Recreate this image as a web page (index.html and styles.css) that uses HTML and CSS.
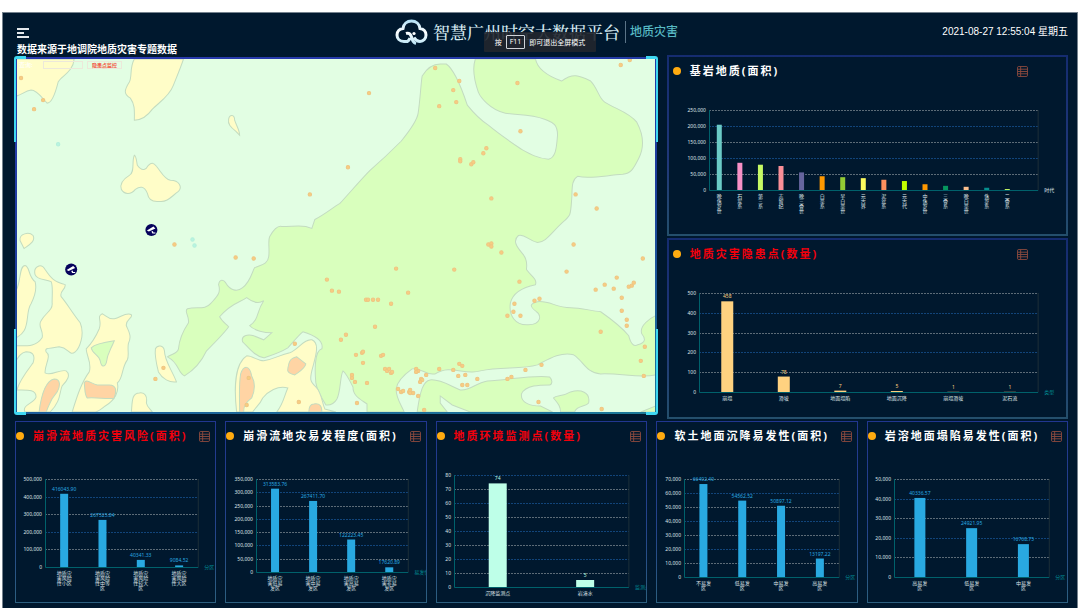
FILE: index.html
```html
<!DOCTYPE html>
<html lang="zh-CN">
<head>
  <meta charset="UTF-8">
  <meta name="viewport" content="width=device-width,initial-scale=1">
  <title>智慧广州时空大数据平台</title>
  <link rel="stylesheet" href="styles.css">
</head>
<body>
<svg class="defs" aria-hidden="true">
  <symbol id="icon-table" viewBox="0 0 12 12">
    <rect x="0.5" y="0.5" width="11" height="11" rx="1.5"/>
    <path d="M0.5 3.5h11M0.5 6h11M0.5 8.5h11M4 0.5v11"/>
  </symbol>
</svg>

<div class="app">
  <header class="header">
    <div class="header-left">
      <button class="menu-btn" type="button" aria-label="菜单">
        <svg viewBox="0 0 12 10"><path d="M0 1h12M0 5h7M0 9h12"/></svg>
      </button>
      <p class="source">数据来源于地调院地质灾害专题数据</p>
    </div>

    <div class="brand">
      <svg class="logo" viewBox="0 0 33 26" aria-hidden="true">
        <defs>
          <linearGradient id="logo-fill" gradientUnits="userSpaceOnUse" x1="0" y1="0" x2="0" y2="26">
            <stop offset="0" stop-color="#a9dcf5"/>
            <stop offset="0.5" stop-color="#ffffff"/>
            <stop offset="1" stop-color="#b9e4f5"/>
          </linearGradient>
        </defs>
        <path stroke="url(#logo-fill)" d="M13 22.500H9C4.500 22.500 2 19.500 2 16C2 12.500 4.500 10 8 9.500C8.500 5 12 2 16.500 2C21 2 24.500 5 25 9.500C28.500 10 31 12.500 31 16C31 19.500 28.500 22.500 25 22.500C22.500 22.500 20.500 21 19 18.500"/>
        <path stroke="url(#logo-fill)" d="M11 14.500C14 13.500 15.500 15 16.500 18C17.500 21.500 18 23.500 21 24.500M12.500 22.500C14 21.500 14.500 20.500 15 19"/>
        <circle cx="19" cy="14.500" r="1.600"/>
      </svg>
      <h1>智慧广州时空大数据平台</h1>
      <span class="brand-sub">地质灾害</span>
      <div class="fs-tip">按 <kbd>F11</kbd> 即可退出全屏模式</div>
    </div>

    <time class="clock" datetime="2021-08-27T12:55:04">2021-08-27 12:55:04 星期五</time>
  </header>

  <main class="main">
    <div class="row-top">
      <section class="map">
        <svg class="map-svg" viewBox="17 59 638 352" preserveAspectRatio="xMidYMid slice" role="img" aria-label="地质灾害分布图">
          <rect class="base" x="17" y="59" width="638" height="352"/>

          <!-- main green zone -->
          <path class="green" d="M168 356C172 353 178 353 179 348C180 336 185 328 189 322C190 315 184 310 188 308C198 306 206 309 211 303C216 297 222 293 219 284C220 278 224 279 226 282C230 289 237 292 243 287C251 281 252 272 255 267C262 264 268 264 269 256C270 248 268 240 270 236C274 229 278 225 282 226C292 226 300 225 306 226L312 228L315 219C325 214 333 207 340 203C350 192 362 178 370 170C385 157 395 147 401 141C410 130 417 120 418 113C420 100 421 80 422 76C428 66 434 64 440 64L446 64C455 70 463 93 467 105C475 115 482 121 488 125C500 135 515 145 521 149C530 154 537 158 548 159C556 157 556 145 557 135C557 122 550 122 544 119C530 114 515 115 505 113C490 110 480 97 478 92C472 75 473 65 475 59L535 59C537 70 550 77 561 81C572 73 578 75 590 81C597 88 598 98 604 102C615 109 628 112 636 122C643 135 643 148 638 158C632 170 630 173 622 174C605 175 590 179 577 176C570 180 572 190 571 200C570 215 570 215 562 222C550 233 545 242 537 242C528 240 524 233 518 235C512 240 516 246 522 253C528 260 526 265 526 269C530 275 537 278 535 284C525 286 513 290 510 302C508 315 515 325 528 324C541 324 541 314 536 311C528 305 530 303 537 301C550 300 555 307 570 307C580 307 590 310 600 311C610 318 620 325 628 335C630 343 633 346 637 344C645 342 645 338 641 333C638 325 650 317 655 315L655 374C640 378 620 372 600 373C585 372 583 360 573 354C560 350 545 360 537 364C520 369 500 365 480 370C465 375 450 363 435 373C425 375 421 366 412 368C405 373 397 380 396 388C396 398 402 405 404 411L367 411L367 403C360 398 353 395 353 386C350 380 346 372 343 370C340 375 341 390 337 398C333 405 328 404 326 404C321 396 317 389 316 382C315 372 314 350 322 348C324 340 316 335 303 331C298 335 290 345 288 347C280 352 270 355 264 357C255 355 250 348 243 341C241 335 248 333 254 335L264 339L272 332C265 332 255 330 250 325C260 318 256 312 264 300C258 304 252 301 247 297C240 302 232 302 220 316C222 320 225 322 229 326C225 332 212 345 207 350C200 365 190 372 185 375C178 372 180 362 168 356Z"/>
          <path class="green" d="M417 411C420 390 423 380 430 379C440 378 450 385 460 389C470 390 475 382 487 380C510 379 530 374 549 376C553 380 551 384 549 384C540 384 525 384 521 393C520 402 530 405 540 405L552 411L470 411L452 404L440 395L440 402L447 411Z"/>
          <path class="green" d="M553 397C556 394 562 396 570 391C580 388 590 391 588 402C585 406 576 404 574 411L560 411C560 405 557 402 553 397Z"/>
          <path class="green" d="M655 405L640 411H655Z"/>

          <!-- yellow zones -->
          <path class="yellow" d="M17 59L75 59C74 72 62 76 59 82C57 90 53 103 48 103C43 98 38 90 32 90C26 91 22 95 17 96Z"/>
          <path class="yellow" d="M135 59C130 68 133 76 130 82C125 90 124 94 131 98C136 105 135 112 135 120C142 120 148 116 153 109C160 102 170 96 174 85C178 75 181 68 184 59Z"/>
          <path class="yellow" d="M229 119C230 114 235 114 235 120C237 126 240 130 240 135L236 131C231 127 228 124 229 119Z"/>
          <path class="yellow" d="M135 155C137 156 137 160 138 165C143 172 147 169 149 165C152 162 154 162 157 166C162 172 165 179 171 180C180 180 183 187 179 191C172 196 168 202 160 201C152 202 149 199 148 193C145 185 140 186 136 189C131 195 125 194 122 189C120 182 125 178 130 175C136 172 132 161 135 155Z"/>
          <path class="yellow" d="M21 240C20 233 30 231 34 235C37 241 29 245 25 248Z"/>
          <path class="yellow" d="M17 290C22 282 20 265 26 265C31 266 29 276 36 281C38 288 35 297 32 303C27 310 30 322 25 330C22 335 20 335 17 337Z"/>
          <path class="yellow" d="M17 345C28 345 37 346 43 337C45 330 38 325 42 320C46 312 54 310 53 302C53 292 54 285 52 281C47 278 38 280 36 274C34 266 42 262 46 269C52 278 55 281 66 284C67 289 60 290 62 296C68 303 73 312 81 322C86 334 80 348 76 351C70 356 70 347 60 346C52 348 45 346 47 351C53 355 45 365 46 372C52 376 60 368 67 370C72 374 68 380 63 385C60 392 62 400 51 411L26 411C22 404 36 402 37 396C37 388 28 389 18 389C20 380 28 370 34 362C37 353 32 351 27 351C22 352 20 355 17 360Z"/>
          <path class="yellow" d="M73 411C78 395 82 382 90 371C93 362 87 355 87 348C93 342 97 335 100 328C103 320 97 316 103 313C107 315 109 319 115 318C121 317 127 311 132 314C134 317 126 319 127 325C129 330 133 335 129 343C128 349 130 355 128 359C122 367 124 378 118 382C120 390 116 399 106 405C100 410 98 411 96 411Z"/>
          <path class="yellow" d="M156 348C158 344 164 344 165 350C165 360 172 368 177 381C170 382 163 378 159 371C157 363 155 355 156 348Z"/>
          <path class="yellow" d="M132 411C133 402 132 392 140 392C146 391 148 396 147 402C148 407 151 408 153 411Z"/>
          <path class="yellow" d="M237 411C234 385 236 362 247 355C253 355 258 360 264 360C275 358 280 354 290 352C299 348 304 338 312 339C320 342 316 355 313 366C309 380 311 381 316 386C322 392 322 402 325 408L336 411L277 411C284 402 284 396 288 387C278 384 268 391 263 397C260 404 256 406 253 411Z"/>
          <path class="green" d="M92 347C96 343 108 341 115 340C111 350 108 352 107 362C105 367 102 366 101 360C100 354 93 353 92 347Z"/>

          <!-- orange zones -->
          <path class="orange" d="M40 411C42 395 46 380 55 378C62 378 61 386 58 391C50 400 50 405 47 411Z"/>
          <path class="orange" d="M85 382C87 377 92 383 98 384L110 384C118 384 117 391 115 397C110 399 98 396 88 397C85 393 86 388 85 382Z"/>
          <path class="orange" d="M240 411C240 395 239 385 241 373C244 364 250 364 252 375C256 382 255 390 252 397C247 401 244 404 244 411Z"/>
          <path class="orange" d="M297 356L306 363C305 368 299 371 295 374C290 373 287 371 288 368C289 362 289 358 297 356Z"/>
          <path class="orange" d="M309 411C309 405 311 403 314 403C320 402 322 405 322 411Z"/>

          <g id="map-dots"></g>

          <g class="camera" transform="translate(152 229.500)">
            <circle r="6"/>
            <path d="M-4.500 0.500L2 -3.500L4 -1.500L-2.500 1.500ZM0 1.500L1 3.500H4V2.500H2L1.500 1Z"/>
          </g>
          <g class="camera" transform="translate(72 269)">
            <circle r="6"/>
            <path d="M-4.500 0.500L2 -3.500L4 -1.500L-2.500 1.500ZM0 1.500L1 3.500H4V2.500H2L1.500 1Z"/>
          </g>
        </svg>

        <div class="map-tools">
          <label for="layer">查询:</label>
          <input id="layer" type="text">
          <button type="button">隐患点监控</button>
        </div>
        <i class="corner tl"></i><i class="corner tr"></i><i class="corner bl"></i><i class="corner br"></i>
      </section>

      <div class="side">
        <section class="panel wide">
          <div class="panel-head">
            <h2>基岩地质(面积)</h2>
            <button type="button" aria-label="表格"><svg><use href="#icon-table"/></svg></button>
          </div>
          <svg class="chart" data-chart="bedrock"></svg>
        </section>
        <section class="panel wide">
          <div class="panel-head alert">
            <h2>地质灾害隐患点(数量)</h2>
            <button type="button" aria-label="表格"><svg><use href="#icon-table"/></svg></button>
          </div>
          <svg class="chart" data-chart="hazard"></svg>
        </section>
      </div>
    </div>

    <div class="row-bottom">
      <section class="panel">
        <div class="panel-head alert">
          <h2>崩滑流地质灾害风险(面积)</h2>
          <button type="button" aria-label="表格"><svg><use href="#icon-table"/></svg></button>
        </div>
        <svg class="chart" data-chart="risk"></svg>
      </section>
      <section class="panel">
        <div class="panel-head">
          <h2>崩滑流地灾易发程度(面积)</h2>
          <button type="button" aria-label="表格"><svg><use href="#icon-table"/></svg></button>
        </div>
        <svg class="chart" data-chart="prone"></svg>
      </section>
      <section class="panel">
        <div class="panel-head alert">
          <h2>地质环境监测点(数量)</h2>
          <button type="button" aria-label="表格"><svg><use href="#icon-table"/></svg></button>
        </div>
        <svg class="chart" data-chart="monitor"></svg>
      </section>
      <section class="panel">
        <div class="panel-head">
          <h2>软土地面沉降易发性(面积)</h2>
          <button type="button" aria-label="表格"><svg><use href="#icon-table"/></svg></button>
        </div>
        <svg class="chart" data-chart="softsoil"></svg>
      </section>
      <section class="panel">
        <div class="panel-head">
          <h2>岩溶地面塌陷易发性(面积)</h2>
          <button type="button" aria-label="表格"><svg><use href="#icon-table"/></svg></button>
        </div>
        <svg class="chart" data-chart="karst"></svg>
      </section>
    </div>
  </main>
</div>
<script src="charts.js"></script>
</body>
</html>
```
FILE: styles.css
```css
* { box-sizing: border-box; margin: 0; padding: 0 }
body {
  height: 100vh;
  padding: 12px 2px 0;
  background: #fff;
  color: #fff;
  font-family: "Noto Sans", "Noto Sans CJK SC", sans-serif;
}
button { background: none; border: 0; cursor: pointer }
.defs { position: absolute; width: 0; height: 0 }
.app {
  display: flex;
  flex-direction: column;
  height: 100%;
  padding: 0 9px 5px 12px;
  background: #00182e;
  border: 1px solid #75828e;
  border-bottom: 0;
}

/* header */
.header {
  display: grid;
  grid-template-columns: 1fr auto 1fr;
  height: 42px;
}
.header-left {
  display: flex;
  flex-direction: column;
  justify-content: flex-end;
  align-items: flex-start;
  gap: 5px;
  padding-left: 2px;
}
.menu-btn { width: 12px; height: 10px }
.menu-btn svg {
  display: block;
  width: 100%;
  height: 100%;
  stroke: #e4e8ec;
  stroke-width: 2;
}
.source {
  font-size: 10px;
  line-height: 12px;
  font-weight: bold;
  white-space: nowrap;
}
.brand {
  position: relative;
  display: flex;
  align-items: center;
  gap: 5px;
  height: 38px;
  padding-right: 10px;
  white-space: nowrap;
}
.logo { width: 33px; height: 26px; fill: none; stroke-width: 3 }
.logo circle { fill: #fff }
.brand h1 {
  font-family: "Noto Serif CJK SC", "Noto Sans CJK SC", serif;
  font-size: 17px;
  line-height: 22px;
  font-weight: 500;
  color: #d5e9f1;
}
.brand-sub {
  padding-left: 4px;
  border-left: 1px solid #5b7387;
  font-size: 12px;
  line-height: 22px;
  font-weight: 500;
  color: #57b9c4;
}
.fs-tip {
  position: absolute;
  top: 19px;
  left: 89px;
  display: flex;
  align-items: center;
  justify-content: center;
  gap: 4px;
  width: 112px;
  height: 20px;
  background: rgba(33, 38, 46, .9);
  border-radius: 1px;
  font-size: 7px;
}
.fs-tip kbd {
  padding: 0 3px;
  border: 1px solid #cfd3d8;
  border-radius: 1px;
  font: 7px/12px "Noto Sans", sans-serif;
}
.clock {
  justify-self: end;
  font: 10px/38px "Liberation Sans", "Noto Sans CJK SC", sans-serif;
}

/* layout */
.main {
  flex: 1;
  min-height: 0;
  display: grid;
  grid-template-rows: minmax(0, 2fr) minmax(0, 1fr);
  gap: 2px;
}
.row-top {
  display: grid;
  grid-template-columns: 8fr 5fr;
  gap: 10px;
}
.side {
  display: grid;
  grid-template-rows: repeat(2, minmax(0, 1fr));
  gap: 2px;
}
.row-bottom {
  display: grid;
  grid-template-columns: 19fr 19fr 20fr 19fr 19fr;
  gap: 9px;
}

/* map */
.map {
  position: relative;
  min-height: 0;
  margin: 2px 0 5px;
  border: 2px solid;
  border-image: linear-gradient(170deg, #2a3ab0, #1c3d9c 50%, #1c7a98) 1;
}
.map-svg { display: block; width: 100%; height: 100% }
.map-svg path { stroke: #c3dcc0; stroke-width: 1 }
.base { fill: #e2fee3 }
.green { fill: #d9ffbd }
.yellow { fill: #fffdc8 }
.orange { fill: #ffd4a4 }
.dot { fill: #f8cd80; stroke: #eec583 }
.dot.water { fill: #b9f5e0; stroke: #b4efdc }
.camera circle { fill: #06035c }
.map-svg .camera path { fill: #fff; stroke: none }
.map-tools {
  position: absolute;
  top: 2px;
  left: 2px;
  display: flex;
  align-items: center;
  gap: 4px;
  font-size: 6px;
  line-height: 8px;
}
.map-tools label { width: 20px }
.map-tools input,
.map-tools button {
  height: 8px;
  border: 1px solid #ece8da;
  background: transparent;
}
.map-tools input { width: 40px }
.map-tools button {
  padding: 0 4px;
  color: #f4533f;
  font: bold 5px/6px "Noto Sans CJK SC", sans-serif;
}
.corner {
  position: absolute;
  width: 12px;
  height: 86px;
  border: 0 solid #3fd8f2;
}
.corner.tl { top: -3px; left: -3px; border-width: 3px 0 0 2px; border-top-left-radius: 3px }
.corner.tr { top: -3px; right: -3px; border-width: 3px 2px 0 0; border-top-right-radius: 3px }
.corner.bl { bottom: -3px; left: -3px; border-width: 0 0 3px 2px; border-bottom-left-radius: 3px }
.corner.br { bottom: -3px; right: -3px; border-width: 0 2px 3px 0; border-bottom-right-radius: 3px }

/* panels */
.panel {
  display: flex;
  flex-direction: column;
  min-width: 0;
  border: 1px solid;
  border-image: linear-gradient(180deg, #213690, #24458c 60%, #2d6080) 1;
}
.panel.wide { border-width: 2px; border-image-source: linear-gradient(180deg, #152c70, #20387a 60%, #244f6c) }
.panel-head {
  display: flex;
  align-items: center;
  height: 28px;
  padding-right: 5px;
}
.panel-head::before {
  content: "";
  flex: none;
  width: 8px;
  height: 8px;
  border-radius: 50%;
  background: #ffab10;
}
.panel.wide .panel-head { padding: 0 38px 0 4px }
.panel-head h2 {
  flex: 1;
  margin-left: 9px;
  font-size: 11px;
  line-height: 16px;
  font-weight: bold;
  letter-spacing: 2px;
  white-space: nowrap;
}
.panel-head.alert h2 { color: #f2000c }
.panel-head button { width: 11px; height: 11px }
.panel-head button svg {
  display: block;
  width: 100%;
  height: 100%;
  fill: none;
  stroke: #8c4a3e;
}

/* charts */
.chart {
  flex: 1 1 0;
  min-height: 0;
  width: 100%;
  font-size: 5px;
  fill: #dfe4e8;
}
.split { stroke: #5c6b77; stroke-dasharray: 2 1 }
.split.even { stroke: #11447a }
.axis { stroke: #00616b }
.edge { stroke: #1c2f38 }
.tick { text-anchor: end }
.cat, .val { text-anchor: middle }
.name { fill: #008c93 }
.name.light { fill: #dfe4e8 }
```
FILE: charts.js
```js
const BLUE = '#29a9e1';

const charts = {
  bedrock: {
    grid: [25, 28, 44, 40], max: 250000, step: 50000, name: '时代', lightName: true, slots: 16,
    barWidth: 5, vertical: true,
    colors: ['#6bcac6', '#f890c6', '#c6f964', '#fb8f98', '#66659e', '#ff9800', '#92ca34', '#fcfb5e',
      '#fc8f5e', '#c2fc00', '#ff9800', '#06965e', '#fcc08e', '#068e8e', '#c6f964'],
    data: [['晚侏罗世', 204000], ['石炭系', 85000], ['第三系', 79000], ['志留纪', 75000], ['晚三叠世', 55000],
      ['白垩系', 43000], ['早白垩世', 40000], ['元古界', 37000], ['泥盆系', 32000], ['元古代', 28000],
      ['中侏罗世', 18000], ['三叠系', 13000], ['晚白垩世', 10000], ['侏罗系', 7000], ['二叠系', 3000]]
  },
  hazard: {
    grid: [25, 28, 25, 30], max: 500, step: 100, name: '类型', barWidth: 12, colors: ['#ffd280'], labels: true,
    data: [['崩塌', '458'], ['滑坡', '78'], ['地面塌陷', '7'], ['地面沉降', '5'], ['崩塌滑坡', '1'], ['泥石流', '1']]
  },
  risk: {
    grid: [29, 17, 35, 29], max: 500000, step: 100000, name: '分区', barWidth: 8, colors: [BLUE], labels: true, wrap: 3,
    data: [['地质灾害风险性小区', '416043.90'], ['地质灾害风险性中等区', '267525.84'],
      ['地质灾害风险性较大区', '40341.33'], ['地质灾害风险性大区', '9084.52']]
  },
  prone: {
    grid: [29, 17, 30, 30], max: 350000, step: 50000, name: '易发性', barWidth: 8, colors: [BLUE], labels: true, wrap: 3,
    data: [['地质灾害低易发区', '313583.76'], ['地质灾害中易发区', '267411.70'],
      ['地质灾害高易发区', '122223.45'], ['地质灾害非易发区', '17620.89']]
  },
  monitor: {
    grid: [25, 18, 15, 17], max: 80, step: 10, name: '监测点', barWidth: 18, colors: ['#beffe8'], labels: true,
    data: [['沉降监测点', '74'], ['岩溶水', '5']]
  },
  softsoil: {
    grid: [29, 17, 25, 27], max: 70000, step: 10000, name: '分区', barWidth: 8, colors: [BLUE], labels: true, wrap: 3,
    data: [['不易发区', '66402.40'], ['低易发区', '54562.52'], ['中易发区', '50897.12'], ['高易发区', '13197.22']]
  },
  karst: {
    grid: [29, 18, 25, 26], max: 50000, step: 10000, name: '分区', barWidth: 11, colors: [BLUE], labels: true, wrap: 3,
    data: [['高易发区', '40336.57'], ['低易发区', '24921.95'], ['中易发区', '16768.75']]
  }
};

function drawChart(svg, c) {
  const { width, height } = svg.getBoundingClientRect();
  const [top, right, bottom, left] = c.grid;
  const x1 = width - right;
  const y1 = Math.round(height - bottom);
  const plot = y1 - top;
  const slot = (x1 - left) / (c.slots || c.data.length);
  let out = '';

  // split lines and y labels
  for (let v = 0, i = 0; v <= c.max; v += c.step, i++) {
    const y = Math.round(y1 - plot * v / c.max);
    if (v > 0) {
      out += `<line class="split ${i % 2 ? '' : 'even'}" x1="${left}" x2="${x1}" y1="${y + 0.5}" y2="${y + 0.5}"/>`;
    }
    out += `<text class="tick" x="${left - 3}" y="${y + 2}">${v.toLocaleString('en-US')}</text>`;
  }

  // bars
  c.data.forEach(([label, value], i) => {
    const x = left + slot * (i + 0.5);
    const h = plot * value / c.max;
    const color = c.colors[i % c.colors.length];
    out += `<rect x="${x - c.barWidth / 2}" y="${y1 - h}" width="${c.barWidth}" height="${h}" fill="${color}"/>`;
    if (c.labels) {
      out += `<text class="val" x="${x}" y="${y1 - h - 3}" fill="${color}">${value}</text>`;
    }
    const size = c.vertical ? 1 : (c.wrap || 10);
    for (let n = 0; n * size < label.length; n++) {
      out += `<text class="cat" x="${x}" y="${y1 + 8 + n * 5}">${label.substr(n * size, size)}</text>`;
    }
  });

  // axes
  out += `<line class="edge" x1="${x1}" x2="${x1}" y1="${top}" y2="${y1}"/>`;
  out += `<path class="axis" fill="none" d="M${left + 0.5} ${top}V${y1 + 0.5}H${x1}"/>`;
  out += `<text class="name ${c.lightName ? 'light' : ''}" x="${x1 + 6}" y="${y1 + 2}">${c.name}</text>`;
  svg.innerHTML = out;
}

function drawAll() {
  document.querySelectorAll('.chart').forEach(svg => drawChart(svg, charts[svg.dataset.chart]));
}

// map points
const hazards = [
  [22,78],[44,100],[35,109],[348,167],[310,194],[435,68],[459,81],[453,90],[456,102],[439,106],[369,93],
  [517,83],[520,131],[486,148],[483,153],[460,159],[460,161],[471,164],[473,162],[491,198],[575,194],[596,208],
  [620,65],[629,60],[175,244],[236,257],[254,258],[327,279],[332,290],[339,291],[295,343],[164,367],[156,378],
  [249,377],[247,404],[299,401],[488,244],[491,243],[491,246],[501,252],[573,244],[642,258],[566,271],[396,268],
  [454,269],[519,281],[408,292],[366,299],[368,299],[373,299],[378,299],[391,303],[375,326],[346,334],[341,339],
  [616,277],[604,284],[595,289],[613,288],[628,286],[631,285],[633,282],[621,297],[621,310],[626,319],[626,325],
  [534,300],[539,298],[514,303],[513,311],[507,315],[520,315],[600,331],[644,346],[640,360],[643,375],[356,354],
  [362,352],[363,351],[381,355],[383,354],[363,362],[352,374],[352,377],[355,381],[367,382],[385,368],[387,370],
  [389,368],[391,372],[392,371],[357,402],[416,368],[418,370],[416,371],[421,378],[422,379],[420,381],[426,374],
  [439,368],[453,369],[459,363],[462,365],[458,375],[465,374],[462,384],[467,384],[477,378],[507,378],[511,376],
  [525,369],[541,364],[398,388],[401,391],[403,390],[409,391],[410,389],[410,392],[413,392],[418,395],[424,409],
  [538,401],[601,408]
];
const waters = [[59,144],[193,239],[195,245]];
const dot = (cls) => ([x, y]) => `<circle class="${cls}" cx="${x}" cy="${y}" r="1.700"/>`;
document.getElementById('map-dots').innerHTML =
  hazards.map(dot('dot')).join('') + waters.map(dot('dot water')).join('');

drawAll();
window.addEventListener('resize', drawAll);
```
